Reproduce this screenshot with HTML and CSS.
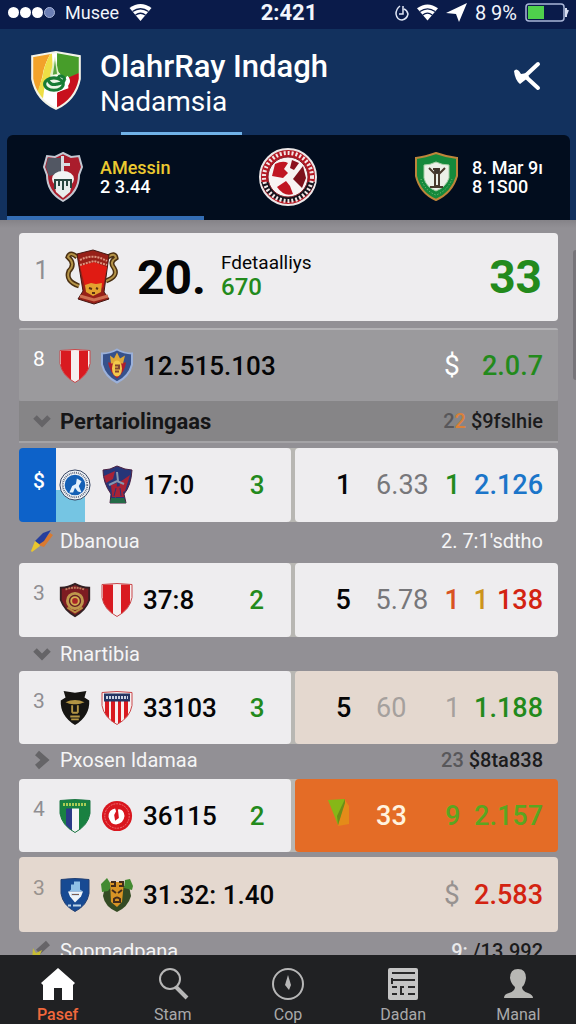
FILE: index.html
```html
<!DOCTYPE html>
<html lang="id">
<head>
    <meta charset="UTF-8">
    <meta name="viewport" content="width=device-width, initial-scale=1.0">
    <title>OlahrRay Indagh</title>
    <link rel="stylesheet" href="styles.css">
</head>
<body>

<!-- Shared shapes -->
<svg class="defs" width="0" height="0" aria-hidden="true">
    <defs>
        <clipPath id="shieldClip"><path d="M1 2Q16 0 31 2V15Q29 27 16 34Q3 27 1 15Z"/></clipPath>
        <symbol id="striped" viewBox="0 0 32 35">
            <g clip-path="url(#shieldClip)">
                <path fill="#f5eeee" d="M0 0h32v35H0z"/>
                <path fill="#d91a20" d="M2 2h10v30H2zM20 2h9v30h-9z"/>
            </g>
            <path d="M1 2Q16 0 31 2V15Q29 27 16 34Q3 27 1 15Z" fill="none" stroke="#c9474a"/>
        </symbol>
        <symbol id="wifi" viewBox="0 0 22 17">
            <path fill="#fff" d="M11 17 0 4Q11-4 22 4Z"/>
            <path d="M3 7.500Q11 2 19 7.500M6 11Q11 7.500 16 11" fill="none" stroke="#0a1b4a" stroke-width="1.300"/>
        </symbol>
        <symbol id="down" viewBox="0 0 18 14">
            <path d="m2 3 7 7 7-7" fill="none" stroke="#656467" stroke-width="5"/>
        </symbol>
    </defs>
</svg>

<!-- Status bar -->
<div class="status">
    <div class="status-left">
        <span class="dots"><i></i><i></i><i></i><i class="weak"></i></span>
        <span>Musee</span>
        <svg width="23" height="17"><use href="#wifi"/></svg>
    </div>
    <strong class="clock">2:421</strong>
    <div class="status-right">
        <svg width="14" height="17" viewBox="0 0 14 17"><path d="M5 2Q1 5 1 10q1 6 6 6 5-1 6-6-1-4-4-5M8 2v8H4" fill="none" stroke="#dfe6f5" stroke-width="1.500"/></svg>
        <svg width="21" height="17"><use href="#wifi"/></svg>
        <svg width="21" height="19" viewBox="0 0 21 19"><path fill="#fff" d="M21 0 13 19 10 11 0 10Z"/></svg>
        <span>8 9%</span>
        <svg width="45" height="19" viewBox="0 0 45 19">
            <rect x="1" y="1" width="38" height="17" rx="3" fill="none" stroke="#a9b6d8" stroke-width="1.500"/>
            <path fill="#4fd14c" d="M3 3h16v13H3z"/>
            <path d="M41 5v9M43 7l-2 5" stroke="#d5dcf0" stroke-width="2"/>
        </svg>
    </div>
</div>

<!-- Header -->
<header class="header">
    <div class="brand">
        <svg class="brand-logo" viewBox="0 0 50 58">
            <clipPath id="brandClip"><path d="M2 5 25 1 48 5V27Q44 47 25 56 6 47 2 27Z"/></clipPath>
            <g clip-path="url(#brandClip)">
                <path fill="#fff" d="M0 0h50v58H0z"/>
                <path fill="#f2a22a" d="M0 0h21Q13 14 12 24l-5 19L0 38Z"/>
                <path fill="#eede45" d="M21 0q-8 14-9 25L6 43l6 6 2-15 8-14Z"/>
                <path fill="#479d2a" d="M26 0h24v20L35 28 26 19Z"/>
                <path fill="#c8101d" d="M50 20 36 26 37 36 26 40v18h24Z"/>
                <path fill="#dff0c8" d="m24 5 4 18-9 1Z"/>
                <path fill="#5aa544" d="m24 9 2 13-4 1Z"/>
            </g>
            <path d="M35 25q5 5-2 10l-8 4" fill="none" stroke="#fff" stroke-width="3"/>
            <ellipse cx="23" cy="32" rx="9" ry="6" fill="#eef5e6" stroke="#187c35" stroke-width="3"/>
            <path d="M17 27q2 7 9 5 8-1 7-6-4-4-6 0" fill="none" stroke="#187c35" stroke-width="3"/>
            <path d="M2 5 25 1 48 5V27Q44 47 25 56 6 47 2 27Z" fill="none" stroke="#f3f3e8" stroke-width="2"/>
        </svg>
        <div class="brand-text">
            <h1>OlahrRay Indagh</h1>
            <p>Nadamsia</p>
        </div>
        <button class="back" aria-label="Kembali">
            <svg width="28" height="32" viewBox="0 0 28 32"><path d="M25 4 11 17M13 17 25 28" fill="none" stroke="#fff" stroke-width="4" stroke-linecap="round"/><path fill="#fff" d="M1 11q2-3 5 0l2 3 6-1 2 4-9 7q-5-4-6-13Z"/></svg>
        </button>
    </div>
    <div class="header-line"></div>
    <nav class="matches">
        <a class="match active" href="#">
            <svg width="42" height="50" viewBox="0 0 42 50">
                <path d="m21 1 8 4 8-1 3 11-3 8q0 17-16 26Q5 40 5 23L2 15 5 4l8 1Z" fill="#aa1d2c" stroke="#c3c8d2" stroke-width="2"/>
                <path fill="#525763" d="M6 6h14v15L7 24 4 15Z"/>
                <path fill="#d7dce2" d="M19 4h3v7h6v3h-6v6h-3Z"/>
                <ellipse cx="21" cy="27" rx="11" ry="8" fill="#f2f4f4"/>
                <path fill="#e8ecec" d="M11 28h20l-3 12-7 6-7-6Z"/>
                <path d="M13 29v8M17 29v5M21 29v9M25 29v5M29 29v7M12 28h18" stroke="#29453f" stroke-width="2"/>
            </svg>
            <span><em>AMessin</em><b>2 3.44</b></span>
        </a>
        <a class="match center" href="#" aria-label="Klub">
            <svg width="60" height="60" viewBox="0 0 60 60">
                <circle cx="30" cy="30" r="28" fill="#b21722" stroke="#ece7e8" stroke-width="2"/>
                <path fill="#15141c" d="M3 35a28 27 0 0 0 54 0Z"/>
                <circle cx="30" cy="30" r="24" fill="none" stroke="#f3e6e6" stroke-width="4" stroke-dasharray="2 2"/>
                <circle cx="30" cy="30" r="20" fill="#f8f3f3" stroke="#86202b"/>
                <path d="M17 17q8-4 13-1l-4 6 4 4-5 5-11-2Z" fill="#c01522"/>
                <path d="m45 19 3 12-4 10-9-9Z" fill="#7d111c"/>
                <path d="m19 40 9-6 4 5 3 8q-9 3-16-7Z" fill="#c01522"/>
                <path d="m34 13 7 3-5 7-4-2Z" fill="#8b101d"/>
            </svg>
        </a>
        <a class="match last" href="#">
            <svg width="45" height="50" viewBox="0 0 45 50">
                <path d="M2 6Q11 5 22 1q11 4 21 5v18Q38 41 22 48 6 41 2 24Z" fill="#15893b" stroke="#bd853a" stroke-width="2"/>
                <path d="M10 13q6 0 12-3 6 3 13 3v13q-3 9-13 13Q12 35 10 26Z" fill="#ecf0e8" stroke="#a4cda3"/>
                <path d="m15 16 6 6v12h4V22l6-6M19 17h7M16 35h13" fill="none" stroke="#493a2d" stroke-width="2"/>
                <circle cx="23" cy="19" r="3" fill="#3e342b"/>
                <path d="M7 27q4 12 15 16 11-4 16-16" fill="none" stroke="#8ccb8b" stroke-dasharray="1 2"/>
            </svg>
            <span><b>8. Mar 9ı</b><b>8 1S00</b></span>
        </a>
    </nav>
</header>

<!-- Standings -->
<main class="list">
    <div class="card featured">
        <span class="rank">1</span>
        <svg width="54" height="56" viewBox="0 0 54 56">
            <path d="M12 8q-7-6-9 0 8 7 1 14-4 10 10 15M43 8q7-5 8 1-7 4-2 10 5 8-8 13" fill="none" stroke="#4a3012" stroke-width="5"/>
            <path d="M12 8q-7-6-9 0 8 7 1 14-4 10 10 15M43 8q7-5 8 1-7 4-2 10 5 8-8 13" fill="none" stroke="#b49347" stroke-width="2"/>
            <path d="M12 5 28 1l16 5-5 37 5 7-15 5-16-5 5-8Z" fill="#972018" stroke="#451712"/>
            <path fill="#e01b13" d="m15 17 14-4 13 5-4 20-10 8-8-8Z"/>
            <path d="M15 11q13-7 27 1M15 16l14-4 13 4" fill="none" stroke="#dd947f" stroke-dasharray="2 1" stroke-width="2"/>
            <path d="m20 36 6-2 5 1 6-1-1 9-8 4-7-4Z" fill="#e4a22f"/>
            <path d="m24 39 3 1m4-1 2 1m-6 4h3" stroke="#593013" stroke-width="2"/>
            <path d="m15 47 14 4 14-4" fill="none" stroke="#cf7052" stroke-width="3"/>
        </svg>
        <strong class="points">20.</strong>
        <span class="info"><b>Fdetaalliys</b><b class="green">670</b></span>
        <strong class="total green">33</strong>
    </div>

    <div class="card plain">
        <span class="rank">8</span>
        <svg class="crest" viewBox="0 0 32 35"><use href="#striped"/></svg>
        <svg class="crest" viewBox="0 0 32 35">
            <path d="M1 5Q9 5 16 1q7 4 15 4v11q-3 12-15 18Q4 28 1 16Z" fill="#36518b" stroke="#9bb1db" stroke-width="2"/>
            <path fill="#af202d" d="M7 14h18q-1 9-9 16-7-6-9-16Z"/>
            <path fill="#e0a936" d="m9 7 4 3 3-6 3 6 5-3-2 8H10Z"/>
            <ellipse cx="16" cy="20" rx="5" ry="8" fill="#f3c94b"/>
            <path d="M14 17h4v3h-4m0 3h4" fill="none" stroke="#814530" stroke-width="2"/>
        </svg>
        <span class="score">12.515.103</span>
        <span class="sign">$</span>
        <span class="value green">2.0.7</span>
    </div>

    <button class="section dark">
        <svg width="18" height="14"><use href="#down"/></svg>
        <b>Pertariolingaas</b>
        <span class="ink"><i>2</i><i class="amber">2</i> $9fslhie</span>
    </button>

    <div class="pair">
        <div class="card selected">
            <span class="rank">$</span>
            <span class="crest-bg"><svg class="crest" viewBox="0 0 34 34">
                <circle cx="17" cy="17" r="16" fill="#f2f5f8" stroke="#273756" stroke-width="1"/>
                <circle cx="17" cy="17" r="13" fill="none" stroke="#5a657c" stroke-width="2" stroke-dasharray="1 1"/>
                <circle cx="17" cy="17" r="11" fill="#1460b6"/>
                <path d="m11 25 3-7 4-2 1-6 5 3-3 5 3 7-4-1-3-4-2 5Z" fill="#e5f2fc"/>
            </svg></span>
            <svg class="crest tall" viewBox="0 0 32 40">
                <path d="m2 5 7-1 7-3 8 3 7 1q-1 16-8 24l2 9H9l1-9Q2 18 2 5Z" fill="#263578" stroke="#4b2142"/>
                <path d="m3 11 11-5-2 8-7 4ZM19 17l10-7-5 16-6 3ZM10 20l6-2-1 15-4-3Z" fill="#a82236"/>
                <path fill="#a82236" d="m12 22 9-1 2 11H11Z"/>
                <path d="m8 20 8-4 7 3M16 7l1 9" fill="none" stroke="#8797ae" stroke-width="2"/>
                <path d="m13 31 2-8m5 8-1-8" stroke="#263578" stroke-width="1"/>
                <path fill="#246b47" d="M10 33h13l2 5H9Z"/>
            </svg>
            <span class="score">17:0</span>
            <span class="count">3</span>
        </div>
        <div class="card stats">
            <span>1</span><span class="gray">6.33</span><span class="green">1</span>
            <span class="value blue">2.126</span>
        </div>
    </div>

    <button class="section">
        <svg width="24" height="24" viewBox="0 0 24 24"><path fill="#d87a31" d="m8 16 12-12 3 2-9 12Z"/><path fill="#263e9d" d="m5 12 8-8 8-3-7 11-6 4Z"/><path fill="#e9c62e" d="m1 22 4-10 4 3 1 2-8 6Z"/></svg>
        <span>Dbanoua</span>
        <span>2. 7:1'sdtho</span>
    </button>

    <div class="pair">
        <div class="card">
            <span class="rank">3</span>
            <svg class="crest" viewBox="0 0 32 38">
                <path d="M1 6q8 0 15-4 7 4 15 4v13Q27 30 16 36 5 30 1 19Z" fill="#7d1c22" stroke="#332023" stroke-width="2"/>
                <path d="M6 8q10-4 20 0" fill="none" stroke="#bb8061" stroke-width="2" stroke-dasharray="2 1"/>
                <circle cx="16" cy="20" r="8" fill="#642026" stroke="#bf984d" stroke-width="3"/>
                <circle cx="16" cy="20" r="4" fill="#a92626" stroke="#d4af52" stroke-width="2"/>
                <path d="m8 27 8 5 8-5" fill="none" stroke="#b78e44" stroke-width="2"/>
            </svg>
            <svg class="crest" viewBox="0 0 32 35"><use href="#striped"/></svg>
            <span class="score">37:8</span>
            <span class="count">2</span>
        </div>
        <div class="card stats">
            <span>5</span><span class="gray">5.78</span><span class="orange">1</span>
            <span class="value red"><i class="gold">1</i><i>138</i></span>
        </div>
    </div>

    <button class="section short">
        <svg width="18" height="14"><use href="#down"/></svg>
        <span>Rnartibia</span>
    </button>

    <div class="pair compact">
        <div class="card">
            <span class="rank">3</span>
            <svg class="crest" viewBox="0 0 32 38">
                <path d="m4 1 12 2 12-2-2 7 5 3q1 16-15 26Q0 27 1 11l5-3Z" fill="#161512"/>
                <path d="M6 13q10-5 20 0-5 2-8 2h-4q-4 0-8-2Z" fill="#b39544"/>
                <path d="M13 16v8m6-8v8m-6 0h6m-8 4h10m-9 3h8" fill="none" stroke="#b39544" stroke-width="2"/>
            </svg>
            <svg class="crest" viewBox="0 0 32 35">
                <g clip-path="url(#shieldClip)">
                    <path fill="#f7efef" d="M0 0h32v35H0z"/>
                    <path fill="#d91a20" d="M4 10h4v25H4zM10 10h4v25h-4zM17 10h3v25h-3zM23 10h4v25h-4z"/>
                    <path d="M3 3h26v8H3z" fill="#253562"/>
                    <path d="M5 7h22" stroke="#ccd3e3" stroke-width="3" stroke-dasharray="2 1"/>
                </g>
                <path d="M1 2Q16 0 31 2V15Q29 27 16 34Q3 27 1 15Z" fill="none" stroke="#c9474a"/>
            </svg>
            <span class="score">33103</span>
            <span class="count">3</span>
        </div>
        <div class="card stats cream">
            <span>5</span><span class="gray light">60</span><span class="gray light">1</span>
            <span class="value green">1.188</span>
        </div>
    </div>

    <button class="section medium">
        <svg width="16" height="20" viewBox="0 0 16 20"><path d="m3 3 8 7-8 7" fill="none" stroke="#656467" stroke-width="6"/></svg>
        <span>Pxosen Idamaa</span>
        <span class="ink"><i>23</i> $8ta838</span>
    </button>

    <div class="pair compact">
        <div class="card">
            <span class="rank">4</span>
            <svg class="crest" viewBox="0 0 32 35">
                <g clip-path="url(#shieldClip)">
                    <path fill="#198141" d="M0 0h32v35H0z"/><path fill="#2a3a87" d="M7 10h6v25H7z"/><path fill="#f4f4f6" d="M13 10h7v25h-7z"/>
                    <path d="M4 6h24" stroke="#a9cb55" stroke-width="3" stroke-dasharray="2 1"/>
                </g>
                <path d="M1 2Q16 0 31 2V15Q29 27 16 34Q3 27 1 15Z" fill="none" stroke="#1f7845"/>
            </svg>
            <svg class="crest" viewBox="0 0 34 34">
                <circle cx="17" cy="17" r="16" fill="#d9161e"/>
                <circle cx="17" cy="17" r="13" fill="none" stroke="#ed7579" stroke-dasharray="2 1"/>
                <path d="M15 9q-7 1-7 9 2 8 8 8 8-1 9-9-1-8-7-7l1 9-4 3-1-6 2-4Z" fill="#fff"/>
            </svg>
            <span class="score">36115</span>
            <span class="count">2</span>
        </div>
        <div class="card stats hot">
            <span><svg width="21" height="28" viewBox="0 0 21 28"><path fill="#e48b19" d="M17 2 21 8v18l-11 2Z"/><path fill="#86b717" d="m0 2 17-1-7 26Z"/><path fill="#6b8e18" d="m17 1 0 4-7 22-1-9Z"/></svg></span>
            <span>33</span><span class="lime">9</span>
            <span class="value lime">2.157</span>
        </div>
    </div>

    <div class="card plain cream">
        <span class="rank">3</span>
        <svg class="crest" viewBox="0 0 32 35">
            <path d="M2 2q14-2 28 0v14q-2 12-14 18Q4 28 2 16Z" fill="#174a93" stroke="#244173"/>
            <path fill="#8fc0e6" d="M12 12V7h3V4h6v8l3 2H10Z"/>
            <path fill="#eef4f8" d="M9 14h15l-2 5-6 6-5-6Z"/>
            <path d="M12 17h8M9 28h3m2 0h8" stroke="#b9d2e8" stroke-width="2"/>
            <path d="M13 17h7" stroke="#7c5d50" stroke-width="1"/>
        </svg>
        <svg class="crest" viewBox="0 0 32 36">
            <path d="M4 9 28 9l2 10q-3 11-14 16Q4 30 2 19Z" fill="#344b24"/>
            <path d="m1 15-1-8 6-6 5 8-4 5ZM31 13l-8-2 1-8 5-1 3 7Z" fill="#438a31"/>
            <path d="M9 5h14l-2 20-5 5-6-5Z" fill="#d89425"/>
            <path d="M10 5h4v4h-4m8-4h4v4h-4M11 13l4 3m6-3-4 3M13 22q3-3 6 0v3h-6Z" fill="none" stroke="#432c1c" stroke-width="2"/>
        </svg>
        <span class="score">31.32: 1.40</span>
        <span class="sign">$</span>
        <span class="value red">2.583</span>
    </div>

    <button class="section">
        <svg width="20" height="22" viewBox="0 0 20 22"><path d="m6 12 10-9" stroke="#666468" stroke-width="6"/><path fill="#c7bd35" d="m1 8 3 5 6-3-5 12-5-2Z"/></svg>
        <span>Sopmadpana</span>
        <span class="ink"><i class="white">9:</i> /13.992</span>
    </button>
    <div class="scrollbar"></div>
</main>

<!-- Bottom tabs -->
<nav class="tabs">
    <a class="tab current" href="#">
        <svg viewBox="0 0 34 34"><path fill="#fff" d="M17 1 34 16l-2 2v15H21V21h-8v12H2V18l-2-2Z"/></svg>
        Pasef
    </a>
    <a class="tab" href="#">
        <svg viewBox="0 0 34 34"><circle cx="14" cy="12" r="10" fill="none" stroke="#b7b7b7" stroke-width="2"/><path d="m20 20 11 11" stroke="#b7b7b7" stroke-width="4"/></svg>
        Stam
    </a>
    <a class="tab" href="#">
        <svg viewBox="0 0 34 34"><circle cx="17" cy="17" r="15" fill="none" stroke="#b7b7b7" stroke-width="2"/><path fill="#b7b7b7" d="m17 8 3 10-2 5-4-5Z"/></svg>
        Cop
    </a>
    <a class="tab" href="#">
        <svg viewBox="0 0 34 34"><rect x="2" y="1" width="30" height="32" rx="2" fill="#c4c4c4"/><path d="M6 6h23M6 13h23M6 20h5m3 0h4m4 0h7M6 27h5m3 0h4m4 0h7M6 11v6m9 4v7" fill="none" stroke="#29292a" stroke-width="2"/></svg>
        Dadan
    </a>
    <a class="tab" href="#">
        <svg viewBox="0 0 34 34"><path fill="#b7b7b4" d="M17 2q8 0 8 9-1 7-4 9 0 4 6 6 5 2 5 5H3q0-4 5-5 6-2 6-6-4-3-5-9 0-9 8-9Z"/></svg>
        Manal
    </a>
</nav>

</body>
</html>
```

FILE: styles.css
```css
* {
    box-sizing: border-box;
}

body {
    display: flex;
    flex-direction: column;
    height: 100vh;
    margin: 0;
    font-family: Roboto, "Liberation Sans", sans-serif;
    color: #050506;
    background-color: #908e93;
}

h1, p {
    margin: 0;
}

a {
    color: inherit;
    text-decoration: none;
}

button {
    border: none;
    background: none;
    font: inherit;
    color: inherit;
    cursor: pointer;
}

i, em {
    font-style: normal;
}

.defs {
    position: absolute;
}

/* Status bar */
.status {
    display: grid;
    grid-template-columns: 1fr auto 1fr;
    align-items: center;
    height: 29px;
    padding: 0 6px 4px 8px;
    background-color: #0a1b4a;
    color: #f2f5fc;
    font-size: 20px;
    flex-shrink: 0;
}

.status-left, .status-right {
    display: flex;
    align-items: center;
    gap: 8px;
}

.status-left {
    gap: 10px;
    font-size: 18px;
}

.status-right {
    justify-content: flex-end;
}

.clock {
    font-size: 22px;
}

.dots {
    display: flex;
    gap: 1px;
}

.dots i {
    width: 11px;
    height: 11px;
    border-radius: 50%;
    background-color: #fff;
}

.dots .weak {
    background-color: #6b7eb4;
    border: 1px solid #a9b6d8;
}

/* Header */
.header {
    background-color: #12315e;
    color: #fff;
    flex-shrink: 0;
}

.brand {
    display: flex;
    align-items: center;
    height: 103px;
    padding: 0 35px 0 30px;
}

.brand-logo {
    width: 52px;
    height: 60px;
}

.brand-text {
    flex: 1;
    padding: 6px 0 0 18px;
}

.brand-text h1 {
    font-size: 31px;
    font-weight: 500;
    line-height: 36px;
}

.brand-text p {
    font-size: 28px;
    line-height: 34px;
}

.back {
    padding: 0;
    padding-bottom: 6px;
}

.header-line {
    width: 21%;
    height: 3px;
    margin-left: 21%;
    background-color: #70b2e8;
}

.matches {
    display: grid;
    grid-template-columns: 35% 30% 35%;
    height: 85px;
    margin: 0 6px 0 7px;
    background-color: #020d1e;
    border-radius: 6px 6px 0 0;
}

.match {
    display: flex;
    align-items: center;
    gap: 16px;
    padding: 3px 0 0 35px;
    border-bottom: 4px solid transparent;
    font-size: 18px;
    line-height: 19px;
}

.match.active {
    border-bottom-color: #346db4;
}

.match.center {
    justify-content: center;
    padding-left: 0;
}

.match.last {
    gap: 13px;
    padding-left: 41px;
}

.match em, .match b {
    display: block;
    font-weight: 500;
}

.match em {
    color: #ebc930;
}

/* Standings */
.list {
    position: relative;
    flex: 1;
    min-height: 0;
    overflow: hidden;
    padding: 13px 18px 0 19px;
    background: linear-gradient(#858388, #929095 8px, #929095);
}

.card {
    display: grid;
    grid-template-columns: 36px 40px 44px 1fr 68px;
    align-items: center;
    justify-items: center;
    height: 74px;
    border-radius: 4px;
    background-color: #eeedef;
    font-size: 26px;
    font-weight: 500;
}

.compact .card {
    height: 73px;
}

.card.featured {
    grid-template-columns: 41px 64px 82px 1fr auto;
    height: 88px;
    padding-right: 16px;
    margin-bottom: 7px;
}

.card.plain {
    grid-template-columns: 36px 40px 44px 1fr 30px 69px;
    height: 73px;
    padding-right: 15px;
    background-color: #9b9a9d;
    border-top: 2px solid #b3b2b5;
    border-radius: 2px;
}

.card.plain.cream {
    height: 75px;
    margin-top: 5px;
    border: none;
    border-radius: 4px;
}

.card.cream {
    background-color: #e4d8cf;
}

.pair {
    display: grid;
    grid-template-columns: 51fr 49fr;
    gap: 4px;
    background: linear-gradient(90deg, transparent 50%, #b8b7b3 50%, #b8b7b3 52%, transparent 52%);
}

.rank {
    padding: 0 0 14px 4px;
    color: #8f8e92;
    font-size: 21px;
    font-weight: 400;
}

.featured .rank {
    font-size: 25px;
}

.plain .rank {
    color: #fff;
}

.plain.cream .rank {
    color: #98928e;
}

.crest {
    width: 32px;
    height: 36px;
}

.crest.tall {
    height: 42px;
}

.score {
    justify-self: start;
    padding-left: 4px;
}

.count {
    color: #238a1c;
}

.sign {
    justify-self: start;
    color: #fff;
    font-size: 28px;
    font-weight: 400;
}

.cream .sign {
    color: #979290;
}

.points {
    justify-self: end;
    font-size: 48px;
}

.total {
    font-size: 46px;
}

.info {
    justify-self: start;
    padding: 0 0 5px 15px;
    font-size: 19px;
    line-height: 24px;
}

.info b {
    display: block;
    font-weight: 400;
}

.info .green {
    font-size: 24px;
    font-weight: 500;
}

.selected {
    background: linear-gradient(90deg, #0d62c9 37px, #eeedef 37px);
}

.selected .rank {
    padding-bottom: 8px;
    color: #fff;
    font-weight: 500;
}

.crest-bg {
    display: grid;
    place-items: center;
    width: 100%;
    height: 100%;
    background: linear-gradient(#75c5e3, #75c5e3) 1px 100% / 29px 32px no-repeat;
}

.stats {
    grid-template-columns: 40px 69px 29px 1fr;
    justify-items: start;
    padding: 0 15px 0 41px;
    font-size: 27px;
}

.stats.hot {
    padding-left: 33px;
    grid-template-columns: 48px 69px 29px 1fr;
    background-color: #e46c26;
    color: #fff3df;
}

.value {
    justify-self: end;
    display: flex;
    gap: 8px;
    font-size: 27px;
}

.gray {
    color: #77777a;
    font-weight: 400;
}

.gray.light {
    color: #a5a09d;
}

.green {
    color: #238a1c;
}

.blue {
    color: #1b75c9;
}

.red {
    color: #d32311;
}

.orange {
    color: #d95322;
}

.gold {
    color: #cc941c;
}

.lime {
    color: #5aa620;
}

.section {
    display: grid;
    grid-template-columns: 36px 1fr auto;
    align-items: center;
    width: 100%;
    height: 41px;
    padding: 0 15px 4px 5px;
    color: #f5f5f6;
    font-size: 20px;
    text-align: left;
}

.section svg {
    justify-self: center;
}

.section.dark {
    height: 42px;
    padding-bottom: 0;
    margin-bottom: 5px;
    background-color: #868587;
    border-bottom: 2px solid #a4a3a6;
}

.section.dark b {
    color: #161617;
    font-size: 22px;
    font-weight: 700;
}

.section.short {
    height: 34px;
    padding-bottom: 0;
}

.section.medium {
    height: 35px;
}

.section .ink {
    color: #1b1b1c;
    font-weight: 500;
}

.section .ink i {
    color: #58575a;
}

.section .ink .amber {
    color: #d9813a;
}

.section .ink .white {
    color: #e9e9ea;
}

.scrollbar {
    position: absolute;
    top: 30px;
    right: 0;
    width: 3px;
    height: 130px;
    border-radius: 3px 0 0 3px;
    background-color: #77757a;
}

/* Bottom tabs */
.tabs {
    display: grid;
    grid-template-columns: repeat(5, 1fr);
    height: 69px;
    background-color: #202123;
    flex-shrink: 0;
}

.tab {
    display: flex;
    flex-direction: column;
    align-items: center;
    gap: 5px;
    padding-top: 12px;
    color: #a9a9aa;
    font-size: 16px;
    line-height: 18px;
}

.tab svg {
    width: 34px;
    height: 34px;
}

.tab.current {
    color: #f0683c;
    font-weight: 500;
}
```
